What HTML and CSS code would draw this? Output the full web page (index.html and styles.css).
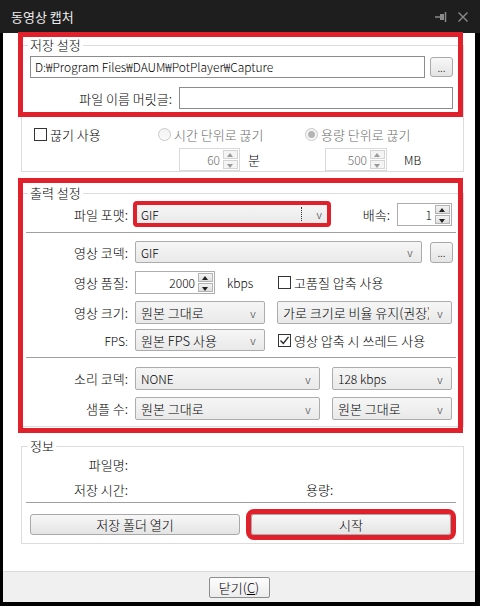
FILE: index.html
```html
<!DOCTYPE html>
<html>
<head>
    <meta charset="utf-8">
    <title>동영상 캡처</title>
    <link rel="stylesheet" href="styles.css">
</head>
<body>

<div class="window">
    <div class="titlebar">
        <span class="title">동영상 캡처</span>
        <span class="title-icons">
            <svg width="12" height="10" viewBox="0 0 12 10">
                <path d="M0 5H5" stroke="#8a8a8a" stroke-width="1.5"/>
                <rect x="5" y="2" width="4" height="6" fill="#8a8a8a"/>
                <path d="M10.5 0V10" stroke="#8a8a8a" stroke-width="1.5"/>
            </svg>
            <svg width="10" height="10" viewBox="0 0 10 10">
                <path d="M0.5 0.5L9.5 9.5M9.5 0.5L0.5 9.5" stroke="#8a8a8a" stroke-width="1.4"/>
            </svg>
        </span>
    </div>

    <div class="content">
        <!-- red highlight marks drawn over the dialog -->
        <div class="mark mark-save"></div>
        <div class="mark mark-output"></div>

        <div class="group group-save">
            <div class="group-title">저장 설정</div>
            <div class="row row-path">
                <div class="edit path en">D:₩Program Files₩DAUM₩PotPlayer₩Capture</div>
                <div class="btn btn-dots">...</div>
            </div>
            <div class="row row-name">
                <div class="lbl lbl-name">파일 이름 머릿글:</div>
                <div class="edit name"></div>
            </div>
            <div class="row row-split">
                <div class="opt opt-use"><span class="check"></span>끊기 사용</div>
                <div class="opt opt-time disabled"><span class="radio"></span>시간 단위로 끊기</div>
                <div class="opt opt-size disabled"><span class="radio on"></span>용량 단위로 끊기</div>
            </div>
            <div class="row row-spin">
                <div class="cell cell-min">
                    <div class="spin disabled w61"><span class="val en">60</span><span class="arrows"><i class="up"></i><i class="dn"></i></span></div>
                    <span class="unit">분</span>
                </div>
                <div class="cell cell-mb">
                    <div class="spin disabled w62"><span class="val en">500</span><span class="arrows"><i class="up"></i><i class="dn"></i></span></div>
                    <span class="unit unit-mb en">MB</span>
                </div>
            </div>
        </div>

        <div class="group group-output">
            <div class="group-title">출력 설정</div>
            <div class="row row-format">
                <div class="lbl">파일 포맷:</div>
                <div class="combo format"><span class="en">GIF</span><span class="arrow focus">v</span></div>
                <div class="lbl lbl-speed">배속:</div>
                <div class="spin w55"><span class="val en">1</span><span class="arrows"><i class="up"></i><i class="dn"></i></span></div>
            </div>
            <div class="sep"></div>
            <div class="row row-codec">
                <div class="lbl">영상 코덱:</div>
                <div class="combo w287"><span class="en">GIF</span><span class="arrow">v</span></div>
                <div class="btn btn-dots">...</div>
            </div>
            <div class="row row-quality">
                <div class="lbl">영상 품질:</div>
                <div class="cell cell-kbps">
                    <div class="spin w80"><span class="val en">2000</span><span class="arrows"><i class="up"></i><i class="dn"></i></span></div>
                    <span class="unit unit-kbps en">kbps</span>
                </div>
                <div class="opt"><span class="check"></span>고품질 압축 사용</div>
            </div>
            <div class="row row-size">
                <div class="lbl">영상 크기:</div>
                <div class="combo w130"><span>원본 그대로</span><span class="arrow">v</span></div>
                <div class="combo w175 second"><span class="clip">가로 크기로 비율 유지(권장)</span><span class="arrow">v</span></div>
            </div>
            <div class="row row-fps">
                <div class="lbl en">FPS:</div>
                <div class="combo w130"><span>원본 FPS 사용</span><span class="arrow">v</span></div>
                <div class="opt opt-thread"><span class="check checked">
                    <svg width="11" height="11" viewBox="0 0 11 11"><path d="M1.5 5.5L4.3 8.5L9.5 1.8" fill="none" stroke="#222" stroke-width="1.3"/></svg>
                </span>영상 압축 시 쓰레드 사용</div>
            </div>
            <div class="sep sep-audio"></div>
            <div class="row row-audio">
                <div class="lbl">소리 코덱:</div>
                <div class="combo w185"><span class="en">NONE</span><span class="arrow">v</span></div>
                <div class="combo w120 second"><span class="en">128 kbps</span><span class="arrow">v</span></div>
            </div>
            <div class="row row-sample">
                <div class="lbl">샘플 수:</div>
                <div class="combo w185"><span>원본 그대로</span><span class="arrow">v</span></div>
                <div class="combo w120 second"><span>원본 그대로</span><span class="arrow">v</span></div>
            </div>
        </div>

        <div class="group group-info">
            <div class="group-title">정보</div>
            <div class="row row-info first">
                <div class="lbl">파일명:</div>
            </div>
            <div class="row row-info">
                <div class="lbl">저장 시간:</div>
                <div class="lbl-size">용량:</div>
            </div>
            <div class="sep sep-info"></div>
            <div class="row row-buttons">
                <div class="btn btn-folder">저장 폴더 열기</div>
                <div class="btn btn-start">시작</div>
            </div>
        </div>
    </div>

    <div class="footer">
        <div class="btn btn-close">닫기(<u>C</u>)</div>
    </div>
</div>

</body>
</html>
```

FILE: styles.css
```css
body {
    margin: 0;
    padding: 0;
    background-color: #000;
    font-family: "Noto Sans CJK KR", "Noto Sans", sans-serif;
    font-size: 13px;
    font-weight: 300;
    color: #000;
}

.en {
    font-size: 12px;
}

.window {
    width: 480px;
    height: 606px;
    display: flex;
    flex-direction: column;
    background-color: #000;
}

.titlebar {
    height: 33px;
    flex: none;
    display: flex;
    align-items: center;
    padding: 0 12px 0 11px;
    background-color: #1e1e1e;
    color: #eeeeee;
    font-size: 13px;
    font-weight: 400;
}

.title {
    flex: 1;
}

.title-icons {
    display: flex;
    align-items: center;
    gap: 11px;
}

.content {
    position: relative;
    height: 538px;
    flex: none;
    margin: 0 5px 0 3px;
    background-color: #fff;
    display: flex;
    flex-direction: column;
}

.footer {
    height: 30px;
    flex: none;
    margin: 0 5px 0 3px;
    border-top: 1px solid #dadada;
    background-color: #f0f0f0;
    display: flex;
    justify-content: center;
    align-items: center;
}

/* red annotation boxes */
.mark {
    position: absolute;
    border: 5px solid #e0202b;
    box-sizing: border-box;
    z-index: 5;
    pointer-events: none;
}

.mark-save {
    left: 15px;
    top: -1px;
    width: 445px;
    height: 85px;
}

.mark-output {
    left: 15px;
    top: 145px;
    width: 445px;
    height: 255px;
}

/* group boxes */
.group {
    display: flex;
    flex-direction: column;
    border: 1px solid #dcdcdc;
    margin: 0 11px 0 18px;
}

.group-title {
    align-self: flex-start;
    height: 16px;
    line-height: 16px;
    margin: -9px 0 0 6px;
    padding: 0 2px;
    background-color: #fff;
}

.group-save {
    margin-top: 12px;
}

.group-output {
    margin-top: 21px;
    padding-bottom: 6px;
}

.group-info {
    margin-top: 19px;
    padding-bottom: 8px;
}

.row {
    display: flex;
    align-items: center;
    flex: none;
}

.lbl {
    width: 106px;
    margin-right: 7px;
    text-align: right;
    flex: none;
    white-space: nowrap;
}

.lbl.en {
    font-size: 12px;
}

/* generic controls */
.edit {
    height: 22px;
    box-sizing: border-box;
    border: 1px solid #8c8c8c;
    background-color: #fff;
    line-height: 20px;
    padding-left: 4px;
    white-space: nowrap;
    overflow: hidden;
}

.btn {
    box-sizing: border-box;
    border: 1px solid #a9a9a9;
    border-radius: 3px;
    background: linear-gradient(#f7f7f7, #e4e4e4);
    display: flex;
    justify-content: center;
    align-items: center;
    flex: none;
}

.btn-dots {
    width: 23px;
    height: 21px;
    margin-left: 8px;
    line-height: 14px;
    font-size: 11px;
    color: #333;
}

.combo {
    height: 23px;
    box-sizing: border-box;
    border: 1px solid #acacac;
    border-radius: 2px;
    background: linear-gradient(#f6f6f6, #e9e9e9);
    display: flex;
    align-items: center;
    padding-left: 5px;
    flex: none;
    white-space: nowrap;
    overflow: hidden;
}

.combo span:first-child {
    flex: 1;
    overflow: hidden;
}

.combo .arrow {
    width: 22px;
    flex: none;
    text-align: center;
    color: #333;
    font-size: 11px;
}

.combo .clip {
    text-overflow: clip;
}

.combo.second {
    margin-left: 12px;
}

.w130 { width: 130px; }
.w175 { width: 175px; }
.w185 { width: 185px; }
.w120 { width: 120px; }
.w287 { width: 287px; }

.spin {
    height: 23px;
    box-sizing: border-box;
    border: 1px solid #abadb3;
    background-color: #fff;
    display: flex;
    align-items: center;
    flex: none;
}

.spin .val {
    flex: 1;
    text-align: right;
    padding-right: 3px;
}

.spin .arrows {
    width: 15px;
    height: 19px;
    margin-right: 1px;
    display: flex;
    flex-direction: column;
    gap: 1px;
}

.spin .arrows i {
    flex: 1;
    box-sizing: border-box;
    border: 1px solid #b3b3b3;
    background: linear-gradient(#f4f4f4, #dedede);
    position: relative;
}

.spin .arrows i::after {
    content: "";
    position: absolute;
    left: 3px;
    top: 2px;
    border-left: 3.5px solid transparent;
    border-right: 3.5px solid transparent;
}

.spin .arrows .up::after {
    border-bottom: 4px solid #222;
}

.spin .arrows .dn::after {
    top: 3px;
    border-top: 4px solid #222;
}

.spin.disabled {
    border-color: #d9d9d9;
    color: #6d6d6d;
}

.spin.disabled .arrows i {
    border-color: #d4d4d4;
    background: #f4f4f4;
}

.spin.disabled .arrows .up::after {
    border-bottom-color: #9a9a9a;
}

.spin.disabled .arrows .dn::after {
    border-top-color: #9a9a9a;
}

.w61 { width: 61px; }
.w62 { width: 62px; }
.w55 { width: 55px; }
.w80 { width: 80px; }

.opt {
    display: flex;
    align-items: center;
    white-space: nowrap;
    flex: none;
}

.check {
    width: 13px;
    height: 13px;
    box-sizing: border-box;
    border: 1px solid #333;
    background-color: #fff;
    margin-right: 3px;
    display: flex;
    justify-content: center;
    align-items: center;
}

.radio {
    width: 13px;
    height: 13px;
    box-sizing: border-box;
    border: 1px solid #c8c8c8;
    border-radius: 50%;
    background: linear-gradient(#f2f2f2, #fafafa);
    margin-right: 3px;
    position: relative;
}

.radio.on::after {
    content: "";
    position: absolute;
    left: 2px;
    top: 2px;
    width: 7px;
    height: 7px;
    border-radius: 50%;
    background-color: #b5b5b5;
}

.disabled {
    color: #6d6d6d;
}

/* 저장 설정 */
.row-path {
    margin: 3px 0 0 8px;
    height: 22px;
}

.path {
    width: 395px;
}

.row-path .btn-dots {
    height: 20px;
    margin-left: 5px;
}

.row-name {
    margin: 9px 0 0 8px;
    height: 22px;
}

.lbl-name {
    width: 142px;
}

.name {
    width: 274px;
}

.row-split {
    margin: 15px 0 0 12px;
    height: 20px;
}

.opt-use {
    width: 124px;
}

.opt-time {
    width: 147px;
}

.row-spin {
    margin: 4px 0 0 157px;
    height: 23px;
}

.cell {
    display: flex;
    align-items: center;
    flex: none;
}

.cell-min {
    width: 146px;
}

.unit {
    margin-left: 8px;
}

.unit-mb {
    margin-left: 17px;
}

/* 출력 설정 */
.row-format {
    margin-top: 2px;
    height: 22px;
}

.combo.format {
    width: 194px;
    height: 22px;
    outline: 4px solid #e0202b;
    outline-offset: -2px;
    padding-right: 3px;
}

.combo .arrow.focus {
    border-left: 1px dotted #333;
    height: 14px;
    line-height: 14px;
    width: 20px;
    text-align: right;
    padding-right: 3px;
}

.lbl-speed {
    width: 61px;
}

.sep {
    height: 1px;
    background-color: #a0a0a0;
    margin: 7px 7px 0 4px;
    flex: none;
}

.sep-audio {
    margin-top: 6px;
}

.row-codec {
    margin-top: 8px;
    height: 22px;
}

.row-codec .combo {
    height: 22px;
}

.row-quality {
    margin-top: 8px;
    height: 23px;
}

.cell-kbps {
    width: 143px;
}

.unit-kbps {
    margin-left: 12px;
}

.row-size {
    margin-top: 7px;
    height: 23px;
}

.row-fps {
    margin-top: 5px;
    height: 22px;
}

.row-fps .combo {
    height: 22px;
}

.opt-thread {
    margin-left: 13px;
}

.check.checked {
    border-color: #333;
}

.row-audio {
    margin-top: 9px;
    height: 23px;
}

.row-sample {
    margin-top: 7px;
    height: 23px;
}

/* 정보 */
.row-info {
    height: 18px;
    margin-top: 7px;
}

.row-info.first {
    margin-top: 1px;
}

.lbl-size {
    margin-left: 171px;
}

.sep-info {
    margin-top: 4px;
}

.row-buttons {
    margin: 11px 0 0 8px;
    height: 21px;
}

.btn-folder {
    width: 210px;
    height: 21px;
}

.btn-start {
    width: 200px;
    height: 21px;
    margin-left: 11px;
    outline: 5px solid #e0202b;
}

.btn-close {
    width: 61px;
    height: 21px;
    border-color: #8c8c8c;
    border-radius: 2px;
    background: linear-gradient(#fdfdfd, #ececec);
}
```
